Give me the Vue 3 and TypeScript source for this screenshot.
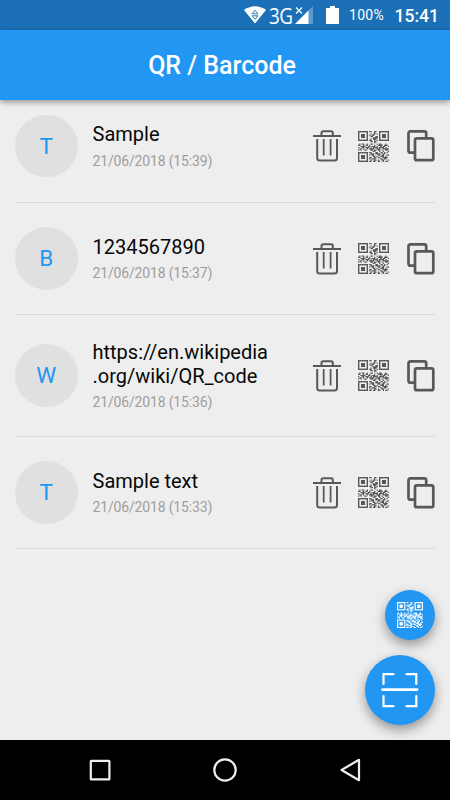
<script setup lang="ts">
interface Entry {
  letter: string
  text: string
  date: string
}

const entries: Entry[] = [
  { letter: 'T', text: 'Sample', date: '21/06/2018 (15:39)' },
  { letter: 'B', text: '1234567890', date: '21/06/2018 (15:37)' },
  { letter: 'W', text: 'https://en.wikipedia\n.org/wiki/QR_code', date: '21/06/2018 (15:36)' },
  { letter: 'T', text: 'Sample text', date: '21/06/2018 (15:33)' },
]

// Data modules of the QR glyph; the three finder squares are drawn separately.
const modules: string[] = [
  '.........##..##..........',
  '.............#...........',
  '..........#.##.#.........',
  '.........#.##............',
  '..........##..##.........',
  '............####.........',
  '..........#.###..........',
  '.........##..#.#.........',
  '..........##.##..........',
  '.............#...........',
  '.#.##..#..##...#.##...#..',
  '##..#.##.#...#..####.###.',
  '..####..##.###.#..#.##..#',
  '#..##.###.#.####.####.#..',
  '.##.#..#.####..###..#####',
  '#.#..##...##.##.##.#..##.',
  '............##...#..#...#',
  '.........##...##..##.#.#.',
  '..........###.####..##...',
  '.........#.##...##.##..##',
  '............##.#..###.#..',
  '.........##..##.##..####.',
  '.........#.###....##.##..',
  '..........#..##.#..##...#',
  '.........##.##..##..#.##.',
]

const dataPath = modules
  .map((row, y) =>
    Array.from(row.matchAll(/#+/g))
      .map((m) => `M${m.index} ${y}h${m[0].length}v1h-${m[0].length}z`)
      .join(''),
  )
  .join('')

const finders: [number, number][] = [[0, 0], [21, 0], [0, 21]]
</script>

<template>
  <div class="screen">
    <div class="status">
      <svg class="wifi" viewBox="0 0 22 18">
        <path d="M0 4Q11-3.5 22 4L11 17.5Z" fill="#fff" />
        <path d="M11 4.2L14 7.8H8ZM11 13.2L14 9.8H8Z" fill="#fff" stroke="#1b70b7" stroke-width=".9" />
      </svg>
      <span class="net"><span>3G</span></span>
      <svg class="signal" viewBox="0 0 18 18">
        <path d="M18 0V18H0Z" fill="#5c9bcf" />
        <path d="M13.5 4.5V18H0Z" fill="#fff" />
        <path d="M0 0H8V9H0Z" fill="#1b70b7" />
        <path d="M1 1.5L7 7.5M7 1.5L1 7.5" stroke="#fff" stroke-width="1.3" />
      </svg>
      <svg class="battery" viewBox="0 0 13 18">
        <path d="M4 0h5v2h4v16H0V2h4z" fill="#fff" />
      </svg>
      <span class="percent">100%</span>
      <span class="clock">15:41</span>
    </div>

    <header class="bar"><h1>QR / Barcode</h1></header>

    <main class="list">
      <div v-for="entry in entries" :key="entry.date" class="row">
        <div class="avatar">{{ entry.letter }}</div>
        <div class="info">
          <div class="text">{{ entry.text }}</div>
          <div class="date">{{ entry.date }}</div>
        </div>
        <div class="actions">
          <svg width="28" height="32" viewBox="0 0 28 32" fill="none" stroke="#585858" stroke-width="2">
            <path d="M0 6H28" />
            <path d="M8.5 6V3Q8.5 1.2 10.3 1.2H18Q19.8 1.2 19.8 3V6" />
            <path d="M4.2 9V28Q4.2 30.5 6.7 30.5H21.5Q24 30.5 24 28V9" />
            <path d="M10.7 9V25.5M17.6 9V25.5" stroke-width="1.8" />
          </svg>
          <svg width="31" height="31" viewBox="0 0 31 31" fill="#585858">
            <path :d="dataPath" transform="scale(1.24)" />
            <g v-for="([x, y], i) in finders" :key="i">
              <rect :x="x + 0.7" :y="y + 0.7" width="8.6" height="8.6" fill="none" stroke="#585858" stroke-width="1.4" />
              <rect :x="x + 3" :y="y + 3" width="4" height="4" />
            </g>
          </svg>
          <svg width="28" height="32" viewBox="0 0 28 32" fill="none" stroke="#585858" stroke-width="2.7">
            <path d="M8 22.7H3.4Q1.5 22.7 1.5 20.8V3.3Q1.5 1.4 3.4 1.4H17.3Q19.2 1.4 19.2 3.3V8" />
            <rect x="8" y="8.4" width="18.3" height="21.8" rx="1.8" />
          </svg>
        </div>
      </div>
    </main>

    <div class="fabs">
      <button class="fab small" aria-label="Create">
        <svg width="26" height="26" viewBox="0 0 31 31" fill="#fff">
          <path :d="dataPath" transform="scale(1.24)" />
          <g v-for="([x, y], i) in finders" :key="i">
            <rect :x="x + 0.7" :y="y + 0.7" width="8.6" height="8.6" fill="none" stroke="#fff" stroke-width="1.4" />
            <rect :x="x + 3" :y="y + 3" width="4" height="4" />
          </g>
        </svg>
      </button>
      <button class="fab large" aria-label="Scan">
        <svg width="38" height="36" viewBox="0 0 38 36" fill="none" stroke="#fff" stroke-width="2.2" stroke-linecap="round">
          <path d="M2.5 12V2.1H12.5M25.5 2.1H35.3V12M2.5 24V34.2H12.5M25.5 34.2H35.3V24" />
          <path d="M1.6 17.7H36" stroke-width="2.8" />
        </svg>
      </button>
    </div>

    <nav class="nav">
      <svg width="24" height="24" viewBox="0 0 24 24"><rect x="2.8" y="2.8" width="18.6" height="18.6" rx=".5" /></svg>
      <svg width="24" height="24" viewBox="0 0 24 24"><circle cx="12" cy="12" r="10.7" /></svg>
      <svg width="24" height="24" viewBox="0 0 24 24"><path d="M21 1.8V22.2L3.5 12Z" stroke-linejoin="round" /></svg>
    </nav>
  </div>
</template>

<style>
body {
  margin: 0;
}
</style>

<style scoped>
.screen {
  position: relative;
  display: flex;
  flex-direction: column;
  width: 450px;
  height: 800px;
  overflow: hidden;
  background: #eee;
  font-family: Roboto, "Liberation Sans", sans-serif;
}
.status {
  display: flex;
  align-items: center;
  flex: none;
  box-sizing: border-box;
  height: 30px;
  padding: 0 11px 0 244px;
  background: #1b70b7;
  color: #fff;
}
.wifi {
  width: 22px;
  height: 18px;
}
.net {
  width: 26px;
  margin-left: 3px;
  font: 22px/30px "Open Sans", sans-serif;
  letter-spacing: -0.6px;
}
.net span {
  display: inline-block;
  transform: scaleX(0.86);
  transform-origin: left center;
}
.signal {
  width: 18px;
  height: 18px;
}
.battery {
  width: 13px;
  height: 18px;
  margin-left: 13px;
}
.percent {
  margin-left: 10px;
  font-size: 14px;
  line-height: 32px;
  letter-spacing: 0.3px;
}
.clock {
  margin-left: auto;
  font-size: 17.5px;
  font-weight: 500;
  line-height: 32px;
  padding-top: 1px;
}
.bar {
  position: relative;
  z-index: 1;
  display: flex;
  align-items: center;
  justify-content: center;
  flex: none;
  height: 70px;
  background: #2196f3;
  color: #fff;
  box-shadow: 0 2px 6px rgba(0, 0, 0, 0.4);
}
h1 {
  margin: 2px 6px 0 0;
  font-size: 25px;
  font-weight: 500;
  line-height: 30px;
}
.list {
  flex: 1;
  margin-top: -10px;
  padding: 0 15px;
}
.row {
  display: flex;
  align-items: center;
  box-sizing: border-box;
  min-height: 112.5px;
  padding: 24px 0;
  border-bottom: 1px solid #dadada;
}
.avatar {
  display: flex;
  align-items: center;
  justify-content: center;
  flex: none;
  width: 62.5px;
  height: 62.5px;
  border-radius: 50%;
  background: #e0e0e0;
  color: #2196f3;
  font-size: 22.5px;
}
.info {
  flex: 1;
  margin-left: 15px;
  padding-top: 2px;
  margin-bottom: -2px;
}
.text {
  color: #080808;
  font-size: 20px;
  line-height: 23.6px;
  white-space: pre;
}
.date {
  padding: 5px 0 1px;
  color: #9e9e9e;
  font-size: 14px;
  line-height: 19.4px;
  letter-spacing: -0.16px;
}
.actions {
  display: flex;
  align-items: center;
  margin-top: 1px;
}
.actions svg {
  display: block;
}
.actions svg:nth-child(2) {
  margin: 0 18px 0 17px;
}
.fabs {
  position: absolute;
  right: 15px;
  top: 590px;
  display: flex;
  flex-direction: column;
  align-items: flex-end;
  gap: 15px;
}
.fab {
  display: flex;
  align-items: center;
  justify-content: center;
  padding: 0;
  border: 0;
  border-radius: 50%;
  background: #2196f3;
  box-shadow: 0 5px 12px rgba(0, 0, 0, 0.38);
}
.small {
  width: 50px;
  height: 50px;
}
.large {
  width: 70px;
  height: 70px;
}
.nav {
  display: flex;
  align-items: center;
  flex: none;
  justify-content: space-between;
  height: 60px;
  padding: 0 88px;
  background: #000;
}
.nav svg {
  fill: none;
  stroke: #eee;
  stroke-width: 2.2;
}
</style>
